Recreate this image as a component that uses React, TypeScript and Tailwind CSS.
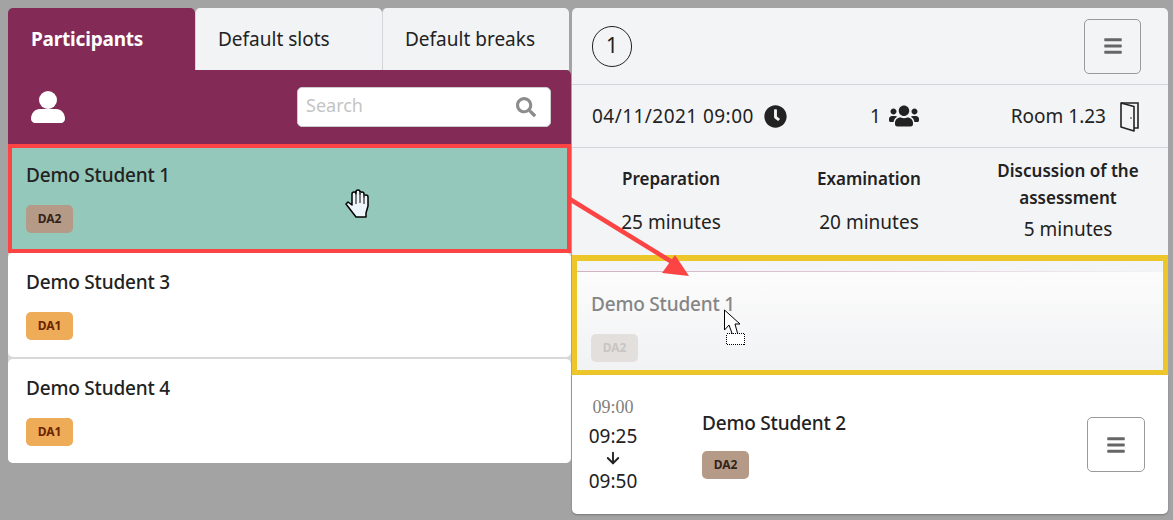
import { ArrowDown } from "lucide-react"
import { FaBars, FaClock, FaSearch, FaUsers } from "react-icons/fa"

const font = "font-['Noto_Sans',sans-serif]"
const nameText = "text-[19px] font-medium leading-[27px] tracking-[-0.2px]"

function Badge({ label, tone }: { label: string; tone: "da1" | "da2" | "faded" }) {
  const tones = {
    da1: "bg-[#eeab58] text-[#6b2400]",
    da2: "bg-[#b59b87] text-[#33241a]",
    faded: "bg-[#e3dfdc] text-[#c9c5c2]",
  }
  return (
    <span
      className={`flex h-[28px] w-[47px] items-center justify-center rounded-[5px] text-[12px] font-bold ${tones[tone]}`}
    >
      {label}
    </span>
  )
}

function MenuButton({ className }: { className: string }) {
  return (
    <button
      className={`flex h-[55px] items-center justify-center rounded-[5px] border border-[#9a9a9a] text-[#666] ${className}`}
    >
      <FaBars size={20} />
    </button>
  )
}

function StudentRow({ name, badge }: { name: string; badge: "DA1" | "DA2" }) {
  return (
    <div className="flex h-[104px] flex-col rounded-[5px] bg-white pl-[18px] pt-[16px]">
      <div className={nameText}>{name}</div>
      <div className="mt-[16px]">
        <Badge label={badge} tone={badge === "DA1" ? "da1" : "da2"} />
      </div>
    </div>
  )
}

function Tab({ label, active }: { label: string; active?: boolean }) {
  return (
    <div
      className={
        active
          ? "flex h-[62px] w-[187px] items-center rounded-t-[5px] bg-[#832b56] pl-[23px] text-[19px] font-bold tracking-[-0.2px] text-white"
          : "flex h-[62px] w-[187px] items-center rounded-t-[5px] border-l border-[#d4d4d8] bg-[#f2f3f5] pl-[22px] text-[19px] text-[#222]"
      }
    >
      {label}
    </div>
  )
}

function Duration({ title, value, wrapped, width }: { title: string; value: string; wrapped?: boolean; width: string }) {
  return (
    <div className={`flex flex-col items-center justify-center pb-[3px] ${width}`}>
      <div className="text-center text-[17px] font-semibold leading-[27px]">{title}</div>
      <div className={`text-[19px] leading-[27px] ${wrapped ? "mt-[5px]" : "mt-[17px]"}`}>{value}</div>
    </div>
  )
}

export default function App() {
  return (
    <div className={`relative h-[520px] w-[1173px] overflow-hidden bg-[#a3a3a3] ${font} text-[#222]`}>
      <div className="flex gap-[1px] pl-[8px] pt-[8px]">
        {/* Left column */}
        <div className="w-[563px]">
          <div className="flex">
            <Tab label="Participants" active />
            <Tab label="Default slots" />
            <Tab label="Default breaks" />
          </div>
          <div className="flex h-[74px] items-center justify-between rounded-tr-[5px] bg-[#832b56] pl-[23px] pr-[20px]">
            <svg viewBox="0 0 34 32" className="h-[32px] w-[34px]" fill="#fff">
              <circle cx="17" cy="9" r="9" />
              <path d="M0 28c0-6 4-10 9-10h16c5 0 9 4 9 10 0 2-2 4-4 4H4c-2 0-4-2-4-4z" />
            </svg>
            <div className="flex h-[40px] w-[254px] items-center justify-between rounded-[5px] border border-[#ccc] bg-white pl-[8px] pr-[14px]">
              <span className="pb-[3px] text-[18px] text-[#c4c4c4]">Search</span>
              <FaSearch size={20} className="text-[#8c8c8c]" />
            </div>
          </div>
          <div className="flex h-[109px] flex-col border-[4px] border-[#fc4444] bg-[#94c8ba] pl-[14px] pt-[14px]">
            <div className={nameText}>Demo Student 1</div>
            <div className="mt-[16px]">
              <Badge label="DA2" tone="da2" />
            </div>
          </div>
          <div className="flex flex-col gap-[2px] rounded-b-[5px] bg-[#d8d8d8]">
            <StudentRow name="Demo Student 3" badge="DA1" />
            <StudentRow name="Demo Student 4" badge="DA1" />
          </div>
        </div>

        {/* Right column */}
        <div className="w-[596px]">
          <div className="rounded-t-[5px] bg-[#f3f4f6]">
            <div className="flex h-[77px] items-center justify-between border-b border-[#d4d4d8] pl-[20px] pr-[27px]">
              <span className="flex h-[41px] w-[40px] items-center justify-center rounded-full border border-[#222] text-[21px]">
                1
              </span>
              <MenuButton className="w-[57px]" />
            </div>
            <div className="flex h-[63px] items-center border-b border-[#d4d4d8] text-[19px]">
              <div className="flex w-[298px] items-center pl-[20px]">
                <span className="tracking-[0.45px]">04/11/2021 09:00</span>
                <FaClock size={23} className="ml-[10px]" />
              </div>
              <div className="flex items-center">
                <span>1</span>
                <FaUsers size={30} className="ml-[8px]" />
              </div>
              <div className="ml-auto flex items-center pr-[28px]">
                <span>Room 1.23</span>
                <svg viewBox="0 0 20 32" className="ml-[14px] h-[32px] w-[20px]" fill="none" stroke="#222" strokeWidth="1.6">
                  <path d="M1 3h17v25h-4" />
                  <path d="M1 3v24l13 4V6.500L1 3z" strokeLinejoin="round" />
                  <circle cx="11" cy="18" r="0.8" fill="#222" stroke="none" />
                </svg>
              </div>
            </div>
            <div className="flex h-[107px] items-center">
              <Duration title="Preparation" value="25 minutes" width="w-[198px]" />
              <Duration title="Examination" value="20 minutes" width="w-[198px]" />
              <Duration title="Discussion of the assessment" value="5 minutes" wrapped width="w-[200px]" />
            </div>
          </div>

          {/* Drop zone */}
          <div className="flex h-[120px] flex-col border-[5px] border-t-[6px] border-[#edc729] bg-[#f3f4f6]">
            <div className="h-[10px] shrink-0" />
            <div className="h-[1px] shrink-0 bg-gradient-to-r from-[#d3b0c2] via-[#e2c9d6] to-transparent" />
            <div className="flex-1 bg-gradient-to-b from-[#fcfcfc] to-[#f1f2f4] pl-[14px] pt-[19px]">
              <div className={`${nameText} text-[#858585]`}>Demo Student 1</div>
              <div className="mt-[16px]">
                <Badge label="DA2" tone="faded" />
              </div>
            </div>
          </div>

          {/* Slot */}
          <div className="flex h-[139px] items-center rounded-b-[5px] bg-white pl-[17px] pr-[23px] shadow-[0_1px_2px_#777]">
            <div className="flex w-[48px] flex-col items-center pb-[2px]">
              <span className="font-['Liberation_Serif',serif] text-[18px] leading-[24px] text-[#808080]">09:00</span>
              <span className="mt-[5px] text-[19px] leading-[24px]">09:25</span>
              <ArrowDown size={18} strokeWidth={2.5} className="mt-[1px]" />
              <span className="mt-[2px] text-[19px] leading-[24px]">09:50</span>
            </div>
            <div className="ml-[65px] flex flex-col">
              <div className={nameText}>Demo Student 2</div>
              <div className="mt-[14px]">
                <Badge label="DA2" tone="da2" />
              </div>
            </div>
            <MenuButton className="ml-auto w-[58px]" />
          </div>
        </div>
      </div>

      {/* Red annotation arrow */}
      <svg className="absolute left-[560px] top-[190px] h-[100px] w-[140px]" viewBox="0 0 140 100">
        <line x1="8" y1="8" x2="112" y2="72" stroke="#fc4444" strokeWidth="4.500" />
        <polygon points="129,86 102,83 115,65" fill="#fc4444" />
      </svg>

      {/* Hand cursor */}
      <svg className="absolute left-[345px] top-[189px] h-[30px] w-[28px]" viewBox="0 0 28 30">
        <path
          d="M1 15L3 13L7 16V5a2 2 0 0 1 4 0V3a2 2 0 0 1 4 0V5a2 2 0 0 1 4 0V8a2 2 0 0 1 4 0V17L21 24V28H11L1 15z"
          fill="#eef5fc"
          stroke="#000"
          strokeWidth="1.500"
          strokeLinejoin="round"
        />
        <path d="M11 5v10M15 3v11M19 6v9" stroke="#555" strokeWidth="1.500" />
      </svg>

      {/* Drag cursor */}
      <svg className="absolute left-[723px] top-[308px] h-[40px] w-[26px]" viewBox="0 0 26 40">
        <polygon points="1.500,2 1.500,22 6,17 10,28 15,27 12,16 17,16" fill="#fff" stroke="#000" strokeWidth="1" />
        <rect x="3.500" y="25.500" width="18" height="11" fill="#fff" stroke="#000" strokeWidth="1" strokeDasharray="1 1" shapeRendering="crispEdges" />
      </svg>
    </div>
  )
}
